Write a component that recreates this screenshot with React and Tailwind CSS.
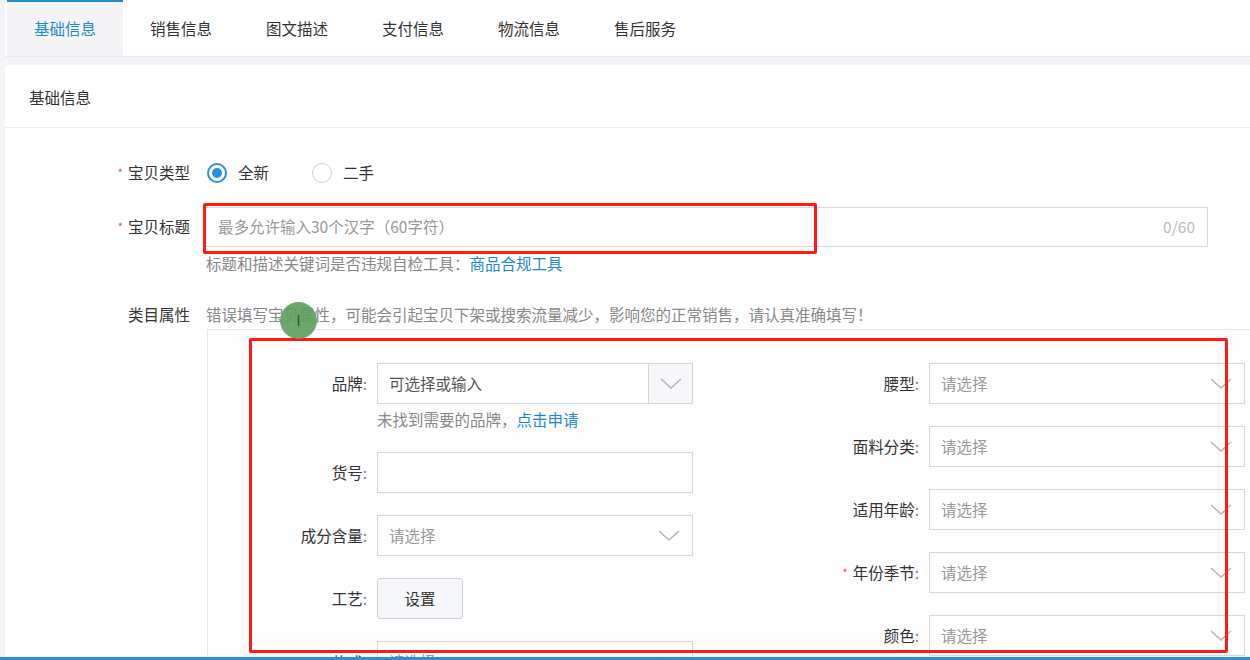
import React from "react";

const font = { fontFamily: '"Noto Sans CJK SC", "Noto Sans", "Liberation Sans", sans-serif' };

function Chevron() {
  return (
    <svg width="22" height="12" viewBox="0 0 22 12" fill="none" className="shrink-0">
      <path d="M1 1 L11 10 L21 1" stroke="#b4b4b4" strokeWidth="1.4" />
    </svg>
  );
}

function Select({ placeholder = "请选择" }) {
  return (
    <div className="w-[316px] h-[41px] border border-[#d6d6d6] bg-white flex items-center justify-between pl-[11px] pr-[12px]">
      <span className="text-[15.5px] text-[#999]">{placeholder}</span>
      <Chevron />
    </div>
  );
}

function Star() {
  return <span className="text-[#f04e4e] text-[11px] mr-[5px] relative -top-[2px]">*</span>;
}

function PropLabel({ children, star, width }) {
  return (
    <div className={`${width} shrink-0 text-right pr-[10px] text-[15.5px] text-[#333]`}>
      {star && <Star />}
      {children}
      <span className="text-[#888]">:</span>
    </div>
  );
}

export default function App() {
  const tabs = ["基础信息", "销售信息", "图文描述", "支付信息", "物流信息", "售后服务"];
  const rightRows = [
    { label: "腰型" },
    { label: "面料分类" },
    { label: "适用年龄" },
    { label: "年份季节", star: true },
    { label: "颜色" },
  ];

  return (
    <div style={font} className="relative h-[660px] overflow-hidden bg-[#f3f4f7] pl-[5px]">
      {/* tabs */}
      <div className="flex h-[57px] bg-white pl-[2px] border-b border-[#e8e9ed]">
        {tabs.map((t, i) => (
          <div
            key={t}
            className={
              i === 0
                ? "w-[116px] flex items-center justify-center text-[15.5px] text-[#2289d3] bg-[#f4f4f7] border-t-2 border-[#2289d3]"
                : "w-[116px] flex items-center justify-center text-[15.5px] text-[#333] border-t-2 border-transparent"
            }
          >
            {t}
          </div>
        ))}
      </div>

      {/* card */}
      <div className="mt-[8px] bg-white h-[600px]">
        <div className="h-[63px] flex items-center pl-[24px] pt-[3px] text-[15.5px] text-[#333] border-b border-[#eceef1]">
          基础信息
        </div>

        <div className="pt-[31px]">
          {/* 宝贝类型 */}
          <div className="flex items-center h-[28px]">
            <div className="w-[185px] text-right text-[15.5px] text-[#333]">
              <Star />
              宝贝类型
            </div>
            <div className="pl-[17px] flex items-center">
              <div className="w-[20px] h-[20px] rounded-full border-2 border-[#2a8fe0] flex items-center justify-center">
                <div className="w-[10px] h-[10px] rounded-full bg-[#2a8fe0]" />
              </div>
              <span className="ml-[11px] text-[15.5px] text-[#333]">全新</span>
              <div className="ml-[43px] w-[20px] h-[20px] rounded-full border border-[#cfcfcf]" />
              <span className="ml-[11px] text-[15.5px] text-[#333]">二手</span>
            </div>
          </div>

          {/* 宝贝标题 */}
          <div className="flex items-center mt-[20px] h-[40px]">
            <div className="w-[185px] text-right text-[15.5px] text-[#333]">
              <Star />
              宝贝标题
            </div>
            <div className="ml-[15px] w-[1003px] h-[40px] border border-[#d9d9d9] flex items-center justify-between pl-[12px] pr-[12px]">
              <span className="text-[15.5px] text-[#999]">最多允许输入30个汉字（60字符）</span>
              <span className="text-[15.5px] text-[#bbb]">0/60</span>
            </div>
          </div>
          <div className="pl-[201px] mt-[6px] text-[15.5px] text-[#888] h-[20px] leading-[20px]">
            标题和描述关键词是否违规自检工具：<span className="text-[#1d87d2]">商品合规工具</span>
          </div>

          {/* 类目属性 */}
          <div className="flex items-center mt-[32px] h-[20px]">
            <div className="w-[185px] text-right text-[15.5px] text-[#333]">类目属性</div>
            <div className="pl-[16px] text-[15.5px] text-[#888]">
              错误填写宝贝属性，可能会引起宝贝下架或搜索流量减少，影响您的正常销售，请认真准确填写！
            </div>
          </div>

          <div className="ml-[202px] mt-[4px] border-t border-l border-[#e6e7ea] bg-[#fdfdfd] pt-[33px] flex">
            {/* left column */}
            <div className="w-[486px] shrink-0 flex flex-col">
              <div className="flex items-center">
                <PropLabel width="w-[169px]">品牌</PropLabel>
                <div className="w-[316px] h-[41px] border border-[#d6d6d6] bg-white flex">
                  <div className="flex-1 flex items-center pl-[11px] text-[15.5px] text-[#555]">可选择或输入</div>
                  <div className="w-[44px] border-l border-[#d6d6d6] bg-[#f5f7fa] flex items-center justify-center">
                    <Chevron />
                  </div>
                </div>
              </div>
              <div className="pl-[169px] mt-[5px] text-[15.5px] text-[#888] h-[20px] leading-[20px]">
                未找到需要的品牌，<span className="text-[#1d87d2]">点击申请</span>
              </div>
              <div className="flex items-center mt-[23px]">
                <PropLabel width="w-[169px]">货号</PropLabel>
                <div className="w-[316px] h-[41px] border border-[#d6d6d6] bg-white" />
              </div>
              <div className="flex items-center mt-[22px]">
                <PropLabel width="w-[169px]">成分含量</PropLabel>
                <Select />
              </div>
              <div className="flex items-center mt-[22px]">
                <PropLabel width="w-[169px]">工艺</PropLabel>
                <div className="w-[86px] h-[41px] border border-[#cfd2d6] rounded-[3px] bg-[#f5f7fa] flex items-center justify-center text-[15.5px] text-[#333]">
                  设置
                </div>
              </div>
              <div className="flex items-start mt-[22px]">
                <PropLabel width="w-[169px] pt-[10px]">款式</PropLabel>
                <Select />
              </div>
            </div>

            {/* right column */}
            <div className="flex flex-col gap-[22px]">
              {rightRows.map((r) => (
                <div key={r.label} className="flex items-center">
                  <PropLabel width="w-[235px]" star={r.star}>
                    {r.label}
                  </PropLabel>
                  <Select />
                </div>
              ))}
            </div>
          </div>
        </div>
      </div>

      {/* annotation overlays */}
      <div className="absolute left-[203px] top-[203px] w-[614px] h-[51px] border-[3px] border-[#ff1a1a] rounded-[2px]" />
      <div className="absolute left-[249px] top-[338px] w-[979px] h-[315px] border-[3px] border-[#ff1a1a] rounded-[2px]" />
      <div className="absolute left-[280px] top-[302px] w-[37px] h-[37px] rounded-full bg-[#5c9f5c]/90 flex items-center justify-center text-[14px] text-[#444]">
        I
      </div>
      <div className="absolute left-0 right-0 bottom-0 h-[3px] bg-[#2e8ddd]" />
    </div>
  );
}
